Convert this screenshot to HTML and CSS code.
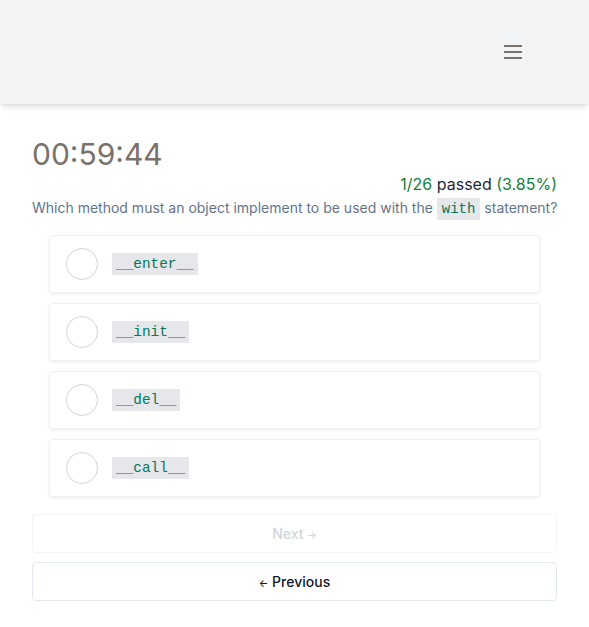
FILE: index.html
```html
<!DOCTYPE html>
<html>
<head>
<meta charset="utf-8">
<link rel="stylesheet" href="styles.css">
</head>
<body>
<header class="topbar">
  <button class="menu-btn" aria-label="menu">
    <svg width="18" height="16" viewBox="0 0 18 16"><rect x="0" y="1" width="18" height="2" fill="#78716c"/><rect x="0" y="7" width="18" height="2" fill="#78716c"/><rect x="0" y="13" width="18" height="2" fill="#78716c"/></svg>
  </button>
</header>
<main class="main">
  <div class="timer">00:59:44</div>
  <div class="score"><span class="green">1/26</span> passed <span class="green">(3.85%)</span></div>
  <p class="question">Which method must an object implement to be used with the <code class="code">with</code> statement?</p>
  <div class="options">
    <label class="option"><span class="radio"></span><code class="code opt-code">__enter__</code></label>
    <label class="option"><span class="radio"></span><code class="code opt-code">__init__</code></label>
    <label class="option"><span class="radio"></span><code class="code opt-code">__del__</code></label>
    <label class="option"><span class="radio"></span><code class="code opt-code">__call__</code></label>
  </div>
  <button class="btn btn-disabled">Next <span class="arrow">→</span></button>
  <button class="btn btn-prev"><span class="arrow">←</span> Previous</button>
</main>
</body>
</html>
```
FILE: styles.css
```css
* { box-sizing: border-box; }
html, body { margin: 0; padding: 0; background: #fff; }
body { font-family: Inter, "Noto Sans", sans-serif; color: #111827; }
.topbar {
  height: 104px;
  background: #f3f4f6;
  box-shadow: 0 4px 6px -1px rgba(0,0,0,0.1), 0 2px 4px -2px rgba(0,0,0,0.1);
  display: flex;
  align-items: center;
  justify-content: flex-end;
  padding-right: 67px;
}
.menu-btn { background: none; border: 0; padding: 0; display: flex; }
.main { padding: 32px 32px 0; }
.timer { font-size: 30px; line-height: 36px; color: #78716c; }
.score { text-align: right; font-size: 16px; line-height: 24px; color: #1f2937; }
.green { color: #15803d; }
.question { margin: 0; font-size: 14px; line-height: 24px; color: #64748b; white-space: nowrap; }
.code { font-family: "Liberation Mono", monospace; background: #e5e7eb; color: #047857; }
.question .code { font-size: 14px; padding: 3px 5px; }
.options { padding: 14px 17px 8px; display: flex; flex-direction: column; gap: 10px; }
.option {
  height: 58px;
  display: flex;
  align-items: center;
  gap: 14px;
  padding: 0 16px;
  border: 1px solid #f0f0f0;
  border-radius: 3px;
  box-shadow: 0 1px 3px rgba(0,0,0,0.08);
}
.radio { width: 32px; height: 32px; border-radius: 50%; border: 1px solid #d1d5db; flex: none; }
.opt-code { font-size: 14.4px; line-height: 22px; padding: 0 4px; }
.btn {
  display: block; width: 100%; height: 39px;
  background: #fff; border-radius: 4px;
  font-family: Inter, sans-serif; font-size: 14px; font-weight: 500;
}
.btn-disabled { border: 1px solid #f3f4f6; color: #d1d5db; margin-top: 9px; }
.btn-prev { border: 1px solid #e2e8f0; color: #111827; margin-top: 9px; }
.arrow { font-size: 10px; }
```
